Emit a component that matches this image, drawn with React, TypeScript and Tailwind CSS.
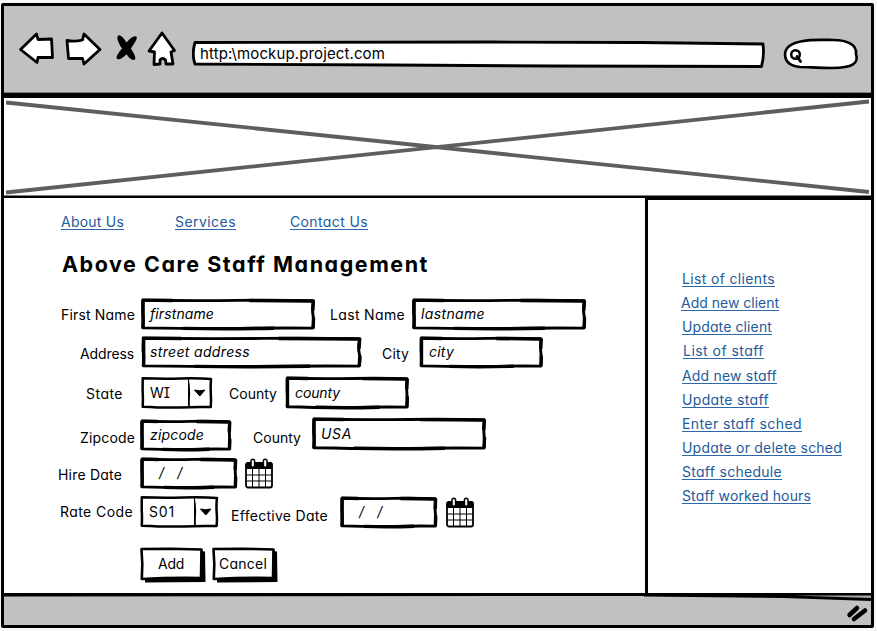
import { useLayoutEffect, useRef, useState } from "react";
import type { ReactNode } from "react";

/** Text whose letter spacing is tuned so that it fills a given width. */
function Fit({ children, w, className = "" }: { children: string; w: number; className?: string }) {
  const ref = useRef<HTMLSpanElement>(null);
  const [spacing, setSpacing] = useState(0);
  useLayoutEffect(() => {
    const el = ref.current;
    if (!el) return;
    el.style.letterSpacing = "0px";
    const natural = el.getBoundingClientRect().width;
    setSpacing((w - natural) / children.length);
    el.style.letterSpacing = `${(w - natural) / children.length}px`;
  }, [children, w]);
  return (
    <span ref={ref} className={`inline-block shrink-0 whitespace-pre leading-4 ${className}`} style={{ letterSpacing: `${spacing}px` }}>
      {children}
    </span>
  );
}

/** Hand-drawn rectangle behind a control, stretched to its box. */
function Sketch({ thin = false }: { thin?: boolean }) {
  return (
    <svg className="absolute inset-0 h-full w-full overflow-visible" viewBox="0 0 100 100" preserveAspectRatio="none" aria-hidden>
      <g fill="none" stroke="#000" strokeLinejoin="round" strokeLinecap="butt">
        <path
          d="M1 4 Q30 6 55 4.5 T98.6 6 Q97.6 30 98.3 52 T98.2 94 Q75 93 55 95 T1 93 Q1.6 60 0.9 45 Z"
          fill="#fff"
          strokeWidth={thin ? 2.5 : 2.9}
          vectorEffect="non-scaling-stroke"
        />
        {!thin && (
          <path
            d="M0.6 3.5 L18 4.8 M62 5 L98.8 6.4 M98.5 6 L98.2 38 M98.6 60 L98.3 95 M24 94.6 Q48 97.5 76 94.3 M1.2 4 L1.2 94"
            strokeWidth={3.4}
            vectorEffect="non-scaling-stroke"
          />
        )}
      </g>
    </svg>
  );
}

function Field({ className, children }: { className: string; children: ReactNode }) {
  return (
    <div className={`relative flex shrink-0 items-center pl-[9px] ${className}`}>
      <Sketch />
      <div className="relative flex pb-px italic">{children}</div>
    </div>
  );
}

function Select({ className, children }: { className: string; children: ReactNode }) {
  return (
    <div className={`relative flex shrink-0 items-center justify-between pl-2 ${className}`}>
      <Sketch thin />
      <div className="relative flex pb-px">{children}</div>
      <svg className="relative h-8 w-6" viewBox="0 0 24 32" aria-hidden>
        <path d="M-0.5 2 Q1.5 13 0.5 22 L0.5 30" fill="none" stroke="#000" strokeWidth="2.6" />
        <path d="M6.5 13 Q11.5 14.5 17 13 L11.8 19 Z" stroke="#000" strokeLinejoin="round" />
      </svg>
    </div>
  );
}

function Calendar({ className }: { className: string }) {
  return (
    <svg className={`h-[31px] w-[28px] shrink-0 ${className}`} viewBox="0 0 28 31" fill="none" stroke="#000" aria-hidden>
      <rect x="1" y="5" width="26" height="24.5" rx="2" fill="#fff" strokeWidth="1.8" />
      <path d="M1 6 Q1 4.5 3 4.5 H25 Q27 4.5 27 6 V10.5 H1 Z" fill="#000" />
      <path d="M7.5 11 V29 M14 11 V29 M20.5 11 V29 M1 17 H27 M1 23 H27" strokeWidth="1" />
      <rect x="6" y="1.2" width="3.6" height="8" rx="1.8" fill="#fff" strokeWidth="1.5" />
      <rect x="18.4" y="1.2" width="3.6" height="8" rx="1.8" fill="#fff" strokeWidth="1.5" />
    </svg>
  );
}

function Button({ children, w, className }: { children: string; w: number; className: string }) {
  return (
    <button className={`relative h-9 w-[66px] shrink-0 pr-[4px] pb-[2px] ${className}`}>
      <svg className="absolute inset-0 h-9 w-[66px]" viewBox="0 0 66 36" aria-hidden>
        <path d="M5 30 L61 29 L61 4 L65 4.5 L65.5 35 L5 35.5 Z" />
        <path d="M1.5 2 L30 1.7 L61.5 2.5 L61 31 Q30 30.5 1.8 32 L2.3 17 Z" fill="#fff" stroke="#000" strokeWidth="2.6" strokeLinejoin="round" />
        <path d="M62.5 5 L63 32 L6 33" fill="none" stroke="#000" strokeWidth="3.8" />
      </svg>
      <Fit w={w} className="relative">{children}</Fit>
    </button>
  );
}

function Link({ children, w, className = "" }: { children: string; w: number; className?: string }) {
  return (
    <a className={`flex shrink-0 text-[#235a9c] ${className}`}>
      <Fit w={w} className="h-[15px] border-b-[1.5px] border-[#2f68a6] leading-[14px]">{children}</Fit>
    </a>
  );
}

function BrowserBar() {
  return (
    <header className="flex h-[86px] shrink-0 items-start bg-[#c1c1c1]">
      <svg className="mt-[22px] ml-[13px] h-10 w-[162px] shrink-0" viewBox="17 28 162 40" fill="#fff" stroke="#000" strokeWidth="2.8" strokeLinejoin="round" strokeLinecap="round" aria-hidden>
        <path d="M20.5 49.5 L36.5 34 L38 39.5 L51.5 39 L52.5 57.5 L38 57.5 L37 62.5 Z" />
        <path d="M67 40.5 Q75 42 82.5 40 L84 34 L100 49.5 L84 64 L82.5 58.5 L68.5 58.5 Z" />
        <path d="M119 36 C122 36 124 40 126.5 44 C129 40 134 36 136 37.5 C137 39 132 45 130 48.5 C132 52 136 58 134 59 C131 60 128 55 126.5 53 C124 56 119 60 117.5 58 C116.5 56 121 51 123 48.5 C120 45 116.5 37 119 36 Z" fill="#000" strokeWidth="1.6" />
        <path d="M162 33 L174.5 50.5 L171 52 L173 64 L166 64 L165.5 60 Q162.5 57 160 60 L160 64 L154 64.5 L154.5 52 L149 51 Z" />
      </svg>
      <div className="relative mt-[34px] ml-[13px] flex h-[28px] w-[574px] shrink-0 items-center pl-2">
        <svg className="absolute inset-0 h-[28px] w-[574px]" viewBox="1 0 574 28" aria-hidden>
          <path d="M4 2.5 L300 2 L450 2.5 L572 4 Q573.5 16 570.5 26.5 L360 26 L200 25 L4 24 Q0.5 14 4 2.5 Z" fill="#fff" stroke="#000" strokeWidth="2.8" strokeLinejoin="round" />
        </svg>
        <Fit w={185} className="relative text-[15px]">{"http:\\mockup.project.com"}</Fit>
      </div>
      <svg className="mt-[31px] ml-[16px] h-[34px] w-[78px] shrink-0" viewBox="782 37 78 34" fill="none" stroke="#000" aria-hidden>
        <path d="M785 54 C786 37 822 40 833 40 C848 40 857 45 856 54 C859 63 853 68 832 68 C818 68 808 67 800 67 C790 66 785 62 785 54 Z" fill="#fff" strokeWidth="2.6" />
        <circle cx="795.5" cy="54.5" r="4.3" strokeWidth="2.5" />
        <path d="M797 56.5 L800.5 61.5" strokeWidth="2.8" strokeLinecap="round" />
      </svg>
    </header>
  );
}

function StaffForm() {
  return (
    <main className="w-[641px] shrink-0">
      <nav className="mt-[17px] ml-[57px] flex h-[15px]">
        <Link w={63}>About Us</Link>
        <Link w={61} className="ml-[51px]">Services</Link>
        <Link w={78} className="ml-[54px]">Contact Us</Link>
      </nav>
      <h1 className="mt-[22px] ml-[58px] flex h-6 text-[21.5px] font-bold">
        <Fit w={367} className="leading-6">Above Care Staff Management</Fit>
      </h1>
      <form>
        <div className="mt-[23px] ml-[57px] flex h-[31px] items-center">
          <Fit w={74}>First Name</Fit>
          <Field className="ml-[6px] h-[31px] w-[175px]"><Fit w={64}>firstname</Fit></Field>
          <Fit w={75} className="ml-[14px]">Last Name</Fit>
          <Field className="ml-[7px] h-[31px] w-[175px]"><Fit w={64}>lastname</Fit></Field>
        </div>
        <div className="mt-[7px] ml-[76px] flex h-[31px] items-center">
          <Fit w={54} className="mt-[2px]">Address</Fit>
          <Field className="ml-[7px] h-[31px] w-[222px]"><Fit w={100}>street address</Fit></Field>
          <Fit w={27} className="mt-[2px] ml-[19px]">City</Fit>
          <Field className="ml-[11px] h-[31px] w-[123px]"><Fit w={25}>city</Fit></Field>
        </div>
        <div className="mt-[9px] ml-[82px] flex h-8 items-center">
          <Fit w={37} className="mt-[2px]">State</Fit>
          <Select className="ml-[19px] h-8 w-[70px]"><Fit w={20}>WI</Fit></Select>
          <Fit w={48} className="mt-[2px] ml-[17px]">County</Fit>
          <Field className="ml-[9px] h-8 w-[123px]"><Fit w={45}>county</Fit></Field>
        </div>
        <div className="mt-[9px] ml-[76px] flex h-[33px] items-center">
          <Fit w={55} className="mt-[6px]">Zipcode</Fit>
          <Field className="mt-[2px] ml-[6px] h-[31px] w-[90px]"><Fit w={54}>zipcode</Fit></Field>
          <Fit w={48} className="mt-[6px] ml-[22px]">County</Fit>
          <Field className="mb-px ml-[11px] h-8 w-[175px]"><Fit w={31}>USA</Fit></Field>
        </div>
        <div className="mt-[7px] ml-[54px] flex h-[31px] items-center">
          <Fit w={64} className="mt-[3px]">Hire Date</Fit>
          <Field className="ml-[19px] h-[31px] w-[96px]"><Fit w={25} className="ml-[9px]">/  /</Fit></Field>
          <Calendar className="ml-[8px]" />
        </div>
        <div className="mt-[7px] ml-[56px] flex h-8 items-center">
          <Fit w={73}>Rate Code</Fit>
          <Select className="ml-[8px] h-8 w-[77px]"><Fit w={26}>S01</Fit></Select>
          <Fit w={97} className="mt-[7px] ml-[13px]">Effective Date</Fit>
          <Field className="ml-[13px] h-[31px] w-[96px]"><Fit w={25} className="ml-[9px]">/  /</Fit></Field>
          <Calendar className="ml-[9px]" />
        </div>
        <div className="mt-[19px] ml-[136px] flex">
          <Button w={26} className="">Add</Button>
          <Button w={48} className="ml-[6px]">Cancel</Button>
        </div>
      </form>
    </main>
  );
}

function Sidebar() {
  return (
    <aside className="flex flex-1 flex-col border-t-2 border-l-3 border-black pt-[72px] pl-[33px]">
      <Link w={93} className="ml-px">List of clients</Link>
      <Link w={98} className="mt-[9px]">Add new client</Link>
      <Link w={90} className="mt-[9px] ml-px">Update client</Link>
      <Link w={81} className="mt-[9px] ml-[2px]">List of staff</Link>
      <Link w={95} className="mt-[10px] ml-px">Add new staff</Link>
      <Link w={87} className="mt-[9px] ml-px">Update staff</Link>
      <Link w={120} className="mt-[9px] ml-px">Enter staff sched</Link>
      <Link w={160} className="mt-[9px] ml-px">Update or delete sched</Link>
      <Link w={100} className="mt-[9px] ml-px">Staff schedule</Link>
      <Link w={129} className="mt-[9px] ml-px">Staff worked hours</Link>
    </aside>
  );
}

export default function App() {
  return (
    <div className="h-[631px] w-[877px] overflow-hidden bg-[#f8f8f8] pt-[3px] pl-px font-[Inter,'Open_Sans',sans-serif] text-sm text-black [font-feature-settings:'cv11','cv08']">
      <div className="flex h-[625px] w-[873px] flex-col rounded-[2px] border-3 border-black bg-white">
        <BrowserBar />
        <svg className="h-[106px] w-[867px] shrink-0" viewBox="0 0 867 106" aria-hidden>
          <path d="M2 10.5 L865 100 M2 100.5 L865 9.5" stroke="#5e5e5e" strokeWidth="3.8" />
          <path d="M0 0.5 H867 V6 H0 Z M0 103.5 H867 V106 H0 Z" />
        </svg>
        <div className="flex h-[395px] shrink-0">
          <StaffForm />
          <Sidebar />
        </div>
        <footer className="min-h-0 flex-1 bg-[#c1c1c1]">
          <svg className="block h-[32px] w-[867px]" viewBox="0 0 867 32" aria-hidden>
            <path d="M0 0 H640 V3 L0 3.5 Z" />
            <path d="M640 -1 L867 0 V8 L780 5 L640 3.5 Z" />
            <path d="M790 2.5 L867 2.5 V5 Z" fill="#aaa" />
            <path d="M845.5 22 L853 15 M850 26 L861 17.5" fill="none" stroke="#000" strokeWidth="4.5" strokeLinecap="round" />
          </svg>
        </footer>
      </div>
    </div>
  );
}
